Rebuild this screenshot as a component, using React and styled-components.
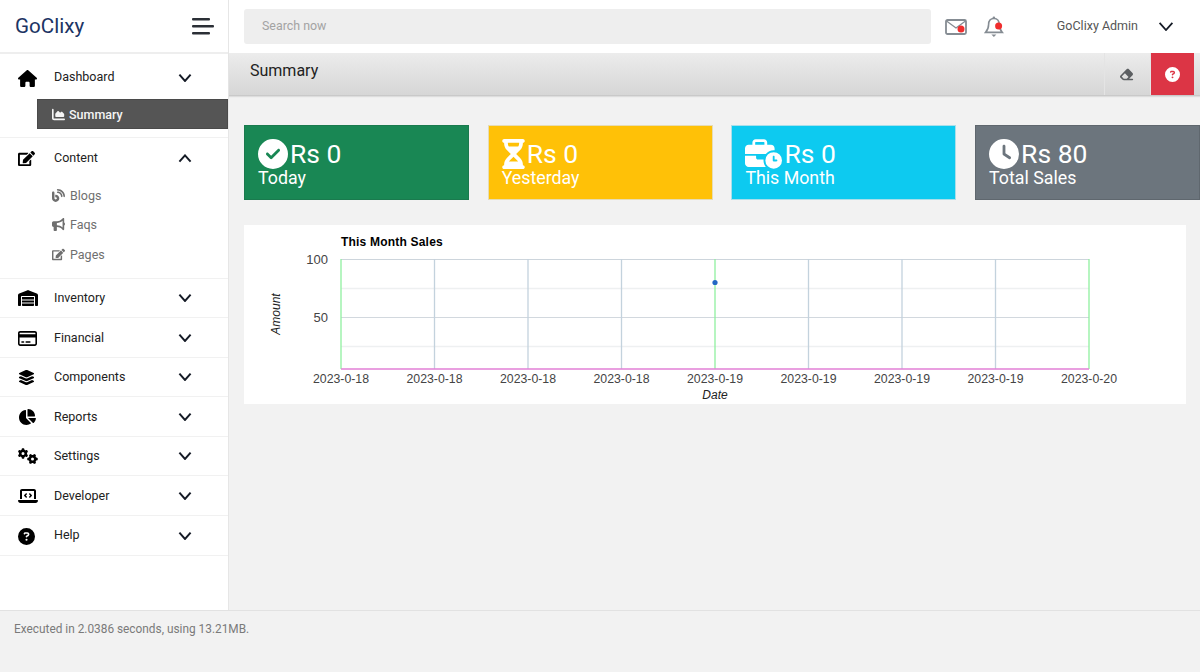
import React from "react";
import styled, { createGlobalStyle } from "styled-components";
import { FaEdit } from "react-icons/fa";
import {
  FaHouse,
  FaWarehouse,
  FaRegCreditCard,
  FaLayerGroup,
  FaChartPie,
  FaGears,
  FaLaptopCode,
  FaCircleQuestion,
  FaChartArea,
  FaBlog,
  FaBullhorn,
  FaEraser,
  FaCircleCheck,
  FaHourglassHalf,
  FaBusinessTime,
  FaClock,
} from "react-icons/fa6";

const GlobalStyle = createGlobalStyle`
  html, body {
    margin: 0;
    padding: 0;
    height: 100%;
    background: #f2f2f2;
    overflow: hidden;
    font-family: Roboto, "Liberation Sans", sans-serif;
  }
  * { box-sizing: border-box; }
`;

const Chevron = ({ up, size = 14, stroke = 2 }) => (
  <svg width={size} height={size * 0.6} viewBox="0 0 20 12" fill="none">
    <path
      d={up ? "M2 11 L10 2 L18 11" : "M2 1 L10 10 L18 1"}
      stroke="#151b26"
      strokeWidth={stroke * 1.4}
    />
  </svg>
);

const menu = [
  { label: "Inventory", icon: FaWarehouse, size: 20, h: 39 },
  { label: "Financial", icon: FaRegCreditCard, size: 19, h: 40 },
  { label: "Components", icon: FaLayerGroup, size: 17, h: 39 },
  { label: "Reports", icon: FaChartPie, size: 18, h: 40 },
  { label: "Settings", icon: FaGears, size: 20, h: 39 },
  { label: "Developer", icon: FaLaptopCode, size: 20, h: 40 },
  { label: "Help", icon: FaCircleQuestion, size: 17, h: 40, lift: 2 },
];

const stats = [
  { value: "Rs 0", label: "Today", icon: FaCircleCheck, iconW: 30, bg: "#198754", line: "#1a7a4e" },
  { value: "Rs 0", label: "Yesterday", icon: FaHourglassHalf, iconW: 23, bg: "#ffc107", line: "#e6dcb4" },
  { value: "Rs 0", label: "This Month", icon: FaBusinessTime, iconW: 37, bg: "#0dcaf0", line: "#a9dfea" },
  { value: "Rs 80", label: "Total Sales", icon: FaClock, iconW: 30, bg: "#6c757d", line: "#5f676e" },
];

const xLabels = [
  "2023-0-18", "2023-0-18", "2023-0-18", "2023-0-18", "2023-0-19",
  "2023-0-19", "2023-0-19", "2023-0-19", "2023-0-20",
];

const SalesChart = () => {
  const left = 97;
  const step = 93.5;
  return (
    <ChartSvg viewBox="0 0 942 179" width="942" height="179">
      <text x={left} y="21" fontSize="12" fontWeight="700" fill="#000" letterSpacing="0.2">This Month Sales</text>
      <text x="84" y="39" fontSize="13" fill="#444" textAnchor="end">100</text>
      <text x="84" y="97" fontSize="13" fill="#444" textAnchor="end">50</text>
      <text
        x="0"
        y="0"
        fontSize="12"
        fontStyle="italic"
        fill="#222"
        textAnchor="middle"
        transform="translate(36 89) rotate(-90)"
      >
        Amount
      </text>

      <line x1={left} x2={left + step * 8} y1="34.5" y2="34.5" stroke="#cdd5dc" />
      <line x1={left} x2={left + step * 8} y1="63.5" y2="63.5" stroke="#eef0f1" strokeWidth="1.6" />
      <line x1={left} x2={left + step * 8} y1="92.5" y2="92.5" stroke="#d2d8de" />
      <line x1={left} x2={left + step * 8} y1="121.5" y2="121.5" stroke="#eef0f1" strokeWidth="1.6" />

      {xLabels.map((label, i) => {
        const x = left + step * i;
        const green = i === 0 || i === 4 || i === 8;
        return (
          <g key={i}>
            <line
              x1={x}
              x2={x}
              y1="34"
              y2="144"
              stroke={green ? "#8ff09f" : "#c3d2dd"}
              strokeWidth="1.3"
            />
            <text x={x} y="158" fontSize="12.3" fill="#444" textAnchor="middle">{label}</text>
          </g>
        );
      })}

      <line x1={left} x2={left + step * 8} y1="144" y2="144" stroke="#e27fd6" strokeWidth="1.5" />
      <circle cx="471" cy="57.5" r="2.6" fill="#2366c4" />
      <text x="471" y="174" fontSize="12" fontStyle="italic" fill="#222" textAnchor="middle">Date</text>
    </ChartSvg>
  );
};

const App = () => (
  <>
    <GlobalStyle />
    <Page>
      <Sidebar>
        <Brand>
          <BrandName>GoClixy</BrandName>
          <svg width="22" height="17" viewBox="0 0 22 17">
            <rect x="0" y="0" width="18" height="2.4" rx="1" fill="#2b2f36" />
            <rect x="0" y="7" width="22" height="2.4" rx="1" fill="#2b2f36" />
            <rect x="0" y="14" width="18" height="2.4" rx="1" fill="#2b2f36" />
          </svg>
        </Brand>

        <Group $h={84}>
          <MenuRow $h={45} $pt={3}>
            <MenuIcon><FaHouse size={19} /></MenuIcon>
            <MenuLabel $lift={2}>Dashboard</MenuLabel>
            <Chevron />
          </MenuRow>
          <ActiveItem>
            <FaChartArea size={13} />
            Summary
          </ActiveItem>
        </Group>

        <Group $h={141}>
          <MenuRow $h={39} $pt={2}>
            <MenuIcon><FaEdit size={17} /></MenuIcon>
            <MenuLabel>Content</MenuLabel>
            <Chevron up />
          </MenuRow>
          <SubList>
            <SubItem><FaBlog size={13} />Blogs</SubItem>
            <SubItem><FaBullhorn size={13} />Faqs</SubItem>
            <SubItem><FaEdit size={13} />Pages</SubItem>
          </SubList>
        </Group>

        {menu.map(({ label, icon: Icon, size, h, lift }) => (
          <Group key={label} $h={h}>
            <MenuRow $h={h - 1} $pt={h === 40 ? 1 : 0}>
              <MenuIcon><Icon size={size} /></MenuIcon>
              <MenuLabel $lift={lift}>{label}</MenuLabel>
              <Chevron />
            </MenuRow>
          </Group>
        ))}
      </Sidebar>

      <Main>
        <TopBar>
          <SearchBox>Search now</SearchBox>
          <MailIcon>
            <svg width="22" height="16" viewBox="0 0 22 16" fill="none">
              <rect x="1" y="1" width="20" height="14" rx="1.5" stroke="#858c93" strokeWidth="1.8" />
              <path d="M1.5 2 L11 9 L20.5 2" stroke="#858c93" strokeWidth="1.3" />
              <circle cx="16" cy="10" r="3.5" fill="#f02d2d" />
            </svg>
          </MailIcon>
          <BellIcon>
            <svg width="20" height="22" viewBox="0 0 20 22" fill="none">
              <path
                d="M10 2.5 C6.2 2.5 4.6 5.4 4.6 8.6 C4.6 12.6 3.4 14.4 1.6 16.4 L18.2 16.4 C16.4 14.4 15.2 12.6 15.2 8.6 C15.2 5.4 13.6 2.5 10 2.5 Z"
                stroke="#858c93"
                strokeWidth="1.6"
              />
              <circle cx="9.9" cy="1.8" r="1.3" fill="#858c93" />
              <path d="M7.4 18.6 H12.4 L9.9 21 Z" fill="#858c93" />
              <circle cx="14.6" cy="10" r="3.5" fill="#f02d2d" />
            </svg>
          </BellIcon>
          <UserName>GoClixy Admin</UserName>
          <Chevron size={16} stroke={1.6} />
        </TopBar>

        <TitleBar>
          <PageTitle>Summary</PageTitle>
          <EraseButton><FaEraser size={15} /></EraseButton>
          <HelpButton><FaCircleQuestion size={15} /></HelpButton>
        </TitleBar>

        <Content>
          <StatRow>
            {stats.map(({ value, label, icon: Icon, iconW, bg, line }) => (
              <StatCard key={label} $bg={bg} $line={line}>
                <StatValue $iconW={iconW}>
                  <Icon size={iconW > 30 ? 36 : 30} />
                  {value}
                </StatValue>
                <StatLabel>{label}</StatLabel>
              </StatCard>
            ))}
          </StatRow>
          <ChartCard>
            <SalesChart />
          </ChartCard>
        </Content>
      </Main>

      <Footer>Executed in 2.0386 seconds, using 13.21MB.</Footer>
    </Page>
  </>
);

export default App;

const Page = styled.div`
  width: 1200px;
  height: 672px;
  display: grid;
  grid-template-columns: 229px 971px;
  grid-template-rows: 610px 62px;
  overflow: hidden;
`;

const Sidebar = styled.aside`
  background: #fff;
  border-right: 1px solid #e6e6e6;
`;

const Brand = styled.div`
  height: 54px;
  padding: 0 14px 0 15px;
  display: flex;
  align-items: center;
  justify-content: space-between;
  border-bottom: 2px solid #eeeeee;
`;

const BrandName = styled.div`
  font-size: 20.6px;
  color: #1c3464;
`;

const Group = styled.div`
  height: ${(p) => p.$h}px;
  border-bottom: 1px solid #f1f1f1;
`;

const MenuRow = styled.div`
  height: ${(p) => p.$h}px;
  display: flex;
  align-items: center;
  padding: ${(p) => p.$pt}px 36px 0 18px;
`;

const MenuIcon = styled.span`
  width: 36px;
  display: flex;
  align-items: center;
  color: #000;
  svg { display: block; }
`;

const MenuLabel = styled.span`
  flex: 1;
  font-size: 12.5px;
  color: #222;
  margin-bottom: ${(p) => (p.$lift || 1) * 2}px;
`;

const ActiveItem = styled.div`
  height: 30px;
  margin-left: 37px;
  display: flex;
  align-items: center;
  gap: 4px;
  padding-left: 14px;
  background: #555555;
  border: 1px solid #4a4a4a;
  color: #f4f4f4;
  font-size: 12.5px;
  font-weight: 500;
`;

const SubList = styled.div`
  padding: 3.4px 0 0 52px;
`;

const SubItem = styled.div`
  height: 29.7px;
  display: flex;
  align-items: center;
  gap: 5px;
  font-size: 12.5px;
  color: #6f6f6f;
`;

const Main = styled.main`
  min-width: 0;
`;

const TopBar = styled.header`
  height: 53px;
  background: #fff;
  display: flex;
  align-items: center;
  padding: 0 26px 0 15px;
`;

const SearchBox = styled.div`
  width: 687px;
  height: 35px;
  background: #eeeeee;
  border-radius: 3px;
  display: flex;
  align-items: center;
  padding: 0 0 2px 18px;
  font-size: 12.4px;
  color: #a3a3a3;
`;

const MailIcon = styled.span`
  display: flex;
  margin-left: 14px;
`;

const BellIcon = styled.span`
  display: flex;
  margin-left: 17px;
`;

const UserName = styled.span`
  margin: 0 20px 2px 53px;
  font-size: 12.5px;
  color: #555;
`;

const TitleBar = styled.div`
  height: 43px;
  display: flex;
  align-items: stretch;
  background: linear-gradient(#ececec, #d6d6d6);
  border-bottom: 1px solid #c9c9c9;
  box-shadow: 0 1px 1px #dddddd;
`;

const PageTitle = styled.h1`
  flex: 1;
  margin: 0;
  padding: 8px 0 0 21px;
  font-size: 16px;
  font-weight: 400;
  color: #222;
`;

const EraseButton = styled.button`
  width: 47px;
  padding: 0 3px 0 0;
  border: 0;
  border-left: 1px solid #e4e4e4;
  border-right: 1px solid #e4e4e4;
  background: transparent;
  color: #5c5f62;
  display: flex;
  align-items: center;
  justify-content: center;
`;

const HelpButton = styled.button`
  width: 43px;
  margin-right: 6px;
  padding: 0;
  border: 0;
  background: #dc3545;
  color: #fff;
  display: flex;
  align-items: center;
  justify-content: center;
`;

const Content = styled.div`
  padding: 29px 0 0 15px;
`;

const StatRow = styled.div`
  display: grid;
  grid-template-columns: repeat(4, 225px);
  column-gap: 18.7px;
`;

const StatCard = styled.div`
  height: 75px;
  padding: 13px 13px 0;
  background: ${(p) => p.$bg};
  border: 1px solid ${(p) => p.$line};
  color: #fff;
`;

const StatValue = styled.div`
  display: flex;
  align-items: center;
  gap: 2px;
  height: 30px;
  font-size: 26.5px;
  line-height: 30px;
  svg { width: ${(p) => p.$iconW}px; flex: none; }
`;

const StatLabel = styled.div`
  font-size: 17.8px;
  line-height: 17px;
`;

const ChartCard = styled.section`
  width: 942px;
  height: 179px;
  margin-top: 25px;
  background: #fff;
`;

const ChartSvg = styled.svg`
  display: block;
  font-family: "Liberation Sans", Arial, sans-serif;
`;

const Footer = styled.footer`
  grid-column: 1 / -1;
  padding: 11px 14px;
  border-top: 1px solid #e2e2e2;
  background: #f2f2f2;
  font-size: 11.85px;
  color: #7a7a7a;
`;
